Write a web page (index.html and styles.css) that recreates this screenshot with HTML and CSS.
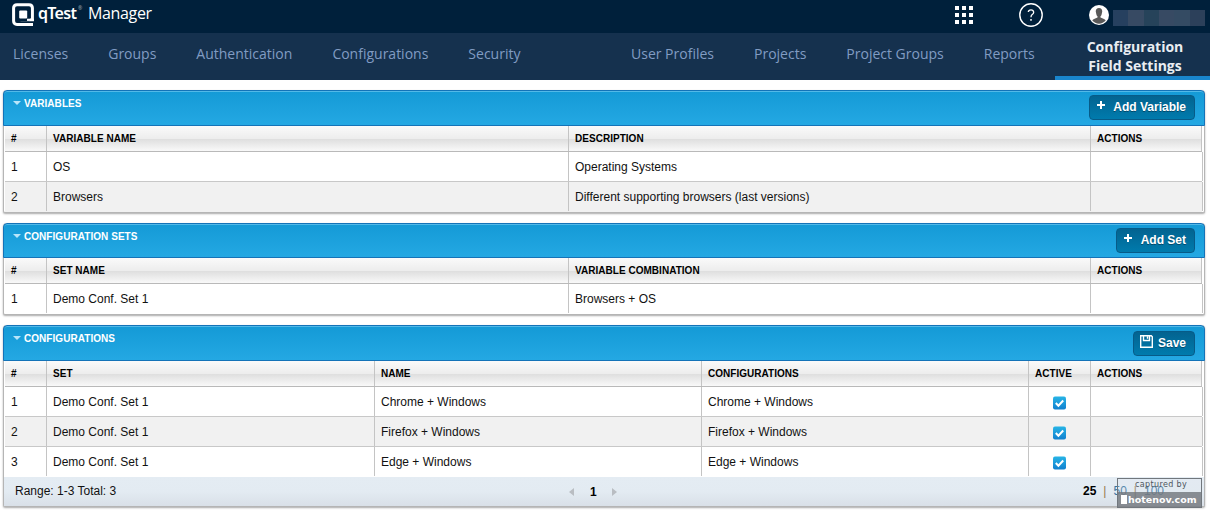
FILE: index.html
```html
<!DOCTYPE html>
<html lang="en">
<head>
<meta charset="utf-8">
<title>qTest Manager - Configuration Field Settings</title>
<link rel="stylesheet" href="styles.css">
</head>
<body>
<header class="topbar">
  <div class="brand">
    <svg class="logo" width="23" height="24" viewBox="0 0 23 24"><path d="M21 21.4H5Q1.6 21.4 1.6 18V5Q1.6 1.7 5 1.7H17Q20.4 1.7 20.4 5V16.7H8.5" fill="none" stroke="#fff" stroke-width="3"/><rect x="4.8" y="5" width="13.6" height="13.3" rx="2" fill="#00203b"/><rect x="7.2" y="7.6" width="8" height="8" rx="1" fill="#fff"/><path d="M15 16.8h6.8" stroke="#fff" stroke-width="2.2"/></svg>
    <span class="qtest">qTest</span><span class="reg">®</span>
    <span class="manager">Manager</span>
  </div>
  <div class="tools">
    <svg class="apps" width="18" height="18" viewBox="0 0 18 18" fill="#fff"><path d="M0 0h4v4H0zM7 0h4v4H7zM14 0h4v4h-4zM0 7h4v4H0zM7 7h4v4H7zM14 7h4v4h-4zM0 14h4v4H0zM7 14h4v4H7zM14 14h4v4h-4z"/></svg>
    <svg class="help" width="24" height="24" viewBox="0 0 24 24" fill="none" stroke="#fff"><circle cx="12" cy="12" r="11.2" stroke-width="1.4"/><path d="M9.3 9Q9.5 6.8 12 6.8T14.7 9.2Q14.7 10.5 13.2 11.6Q12 12.5 12 14.2" stroke-width="1.3"/><path d="M12 16v1.7" stroke-width="1.5"/></svg>
    <svg class="avatar" width="20" height="20" viewBox="0 0 20 20"><circle cx="10" cy="10" r="10" fill="#fff"/><path d="M10 3C7.6 3 6.6 4.6 6.8 6.8L7.4 9.4Q7.8 10.7 8.5 11.3V12.6L5 14Q3.6 14.6 3.3 15.6A8.8 8.8 0 0 0 16.7 15.6Q16.4 14.6 15 14L11.5 12.6V11.3Q12.2 10.7 12.6 9.4L13.2 6.8C13.4 4.6 12.4 3 10 3Z" fill="#595959"/></svg>
    <div class="mask"><i></i><i></i><i></i><i></i><i></i><i></i></div>
  </div>
</header>
<nav class="nav">
  <div class="nav-left"><a>Licenses</a><a>Groups</a><a>Authentication</a><a>Configurations</a><a>Security</a></div>
  <div class="nav-right"><a>User Profiles</a><a>Projects</a><a>Project Groups</a><a>Reports</a></div>
  <a class="active">Configuration<br>Field Settings</a>
</nav>
<main>
  <section class="panel variables">
    <div class="title"><i class="caret"></i><h2>VARIABLES</h2>
      <button class="w-var"><svg width="8" height="8" viewBox="0 0 8 8"><path d="M3 0h2v3h3v2H5v3H3V5H0V3h3z" fill="#fff"/></svg>Add Variable</button></div>
    <div class="row head"><b>#</b><b>VARIABLE NAME</b><b>DESCRIPTION</b><b>ACTIONS</b></div>
    <div class="row"><span>1</span><span>OS</span><span>Operating Systems</span><span></span></div>
    <div class="row alt"><span>2</span><span>Browsers</span><span>Different supporting browsers (last versions)</span><span></span></div>
  </section>
  <section class="panel sets">
    <div class="title"><i class="caret"></i><h2>CONFIGURATION SETS</h2>
      <button class="w-set"><svg width="8" height="8" viewBox="0 0 8 8"><path d="M3 0h2v3h3v2H5v3H3V5H0V3h3z" fill="#fff"/></svg>Add Set</button></div>
    <div class="row head"><b>#</b><b>SET NAME</b><b>VARIABLE COMBINATION</b><b>ACTIONS</b></div>
    <div class="row"><span>1</span><span>Demo Conf. Set 1</span><span>Browsers + OS</span><span></span></div>
  </section>
  <section class="panel configs">
    <div class="title"><i class="caret"></i><h2>CONFIGURATIONS</h2>
      <button class="w-save"><svg width="13" height="13" viewBox="0 0 13 13" fill="none" stroke="#fff"><path d="M.7.7h10.6l1 1v10.6H.7z" stroke-width="1.4"/><path d="M3.5 1v4.5h6V1M7.5 1.3v2.5" stroke-width="1.4"/></svg>Save</button></div>
    <div class="row head"><b>#</b><b>SET</b><b>NAME</b><b>CONFIGURATIONS</b><b>ACTIVE</b><b>ACTIONS</b></div>
    <div class="row"><span>1</span><span>Demo Conf. Set 1</span><span>Chrome + Windows</span><span>Chrome + Windows</span><span class="check"><svg width="13" height="14" viewBox="0 0 13 14"><use href="#tick"/></svg></span><span></span></div>
    <div class="row alt"><span>2</span><span>Demo Conf. Set 1</span><span>Firefox + Windows</span><span>Firefox + Windows</span><span class="check"><svg width="13" height="14" viewBox="0 0 13 14"><use href="#tick"/></svg></span><span></span></div>
    <div class="row last"><span>3</span><span>Demo Conf. Set 1</span><span>Edge + Windows</span><span>Edge + Windows</span><span class="check"><svg width="13" height="14" viewBox="0 0 13 14"><use href="#tick"/></svg></span><span></span></div>
    <div class="footer">
      <span>Range: 1-3 Total: 3</span>
      <div class="pager"><i class="prev"></i><b>1</b><i class="next"></i></div>
      <div class="sizes"><b>25</b><em>|</em><a>50</a><em>|</em><a>100</a></div>
    </div>
    <div class="stamp"><div class="cap">captured by</div><div class="site"><i></i>hotenov.com</div></div>
  </section>
</main>
<svg class="defs" width="0" height="0"><defs>
  <linearGradient id="blue" x1="0" y1="0" x2="0" y2="1"><stop offset="0" stop-color="#27b4e6"/><stop offset="1" stop-color="#1180cf"/></linearGradient>
  <g id="tick"><rect width="13" height="13" y=".5" rx="2" fill="url(#blue)"/><path d="M2.8 7l2.6 2.7 4.8-5.2" fill="none" stroke="#fff" stroke-width="2"/></g>
</defs></svg>
</body>
</html>
```
FILE: styles.css
```css
* { box-sizing: border-box; }
body { margin: 0; height: 516px; overflow: hidden; background: #fff; color: #111; font: 12px "Liberation Sans", Arial, sans-serif; }
.topbar { height: 33px; background: #00203b; display: flex; justify-content: space-between; font-family: "Open Sans", "Noto Sans", sans-serif; color: #fff; }
.brand { display: flex; align-items: flex-start; padding: 3px 0 0 12px; }
.qtest { font: 600 16px/21px "Noto Sans", sans-serif; margin-left: 3px; width: 40px; letter-spacing: -.7px; }
.reg { font-size: 5px; line-height: 10px; width: 10px; opacity: .6; }
.manager { font: 16px/21px "Open Sans", sans-serif; letter-spacing: -.35px; }
.tools { display: flex; padding: 3px 5px 0 0; }
.apps { margin: 3px 46px 0 0; }
.help { margin: 0 46px 0 0; }
.avatar { margin: 2px 4px 0 0; }
.mask { display: grid; grid-template-columns: repeat(6, 1fr); width: 92px; height: 16px; margin-top: 7px; }
.mask i { background: #374a63; }
.mask i:nth-child(1) { background: #26405f; }
.mask i:nth-child(3) { background: #26435a; }
.mask i:nth-child(5) { background: #344b63; }
.mask i:nth-child(6) { background: #2c405a; }

.nav { height: 47px; background: #15314e; display: flex; font: 14px/20px "Open Sans", "Noto Sans", sans-serif; color: #819cc3; }
.nav-left, .nav-right { display: flex; gap: 40px; padding: 11px 0 0 13px; white-space: nowrap; }
.nav-left { width: 618px; }
.nav-right { width: 437px; }
.nav .active { width: 155px; border-bottom: 4px solid #1985cc; color: #e9edf2; font-weight: 700; line-height: 19px; text-align: center; padding: 4px 0 0 5px; white-space: nowrap; }

main { padding: 10px 5px 0 3px; }
.panel { position: relative; width: 1202px; border: 1px solid #b5b5b5; border-top: 0; padding: 0 2px 0 1px; border-radius: 4px 4px 2px 2px; box-shadow: 0 1px 2px #aaa; margin-bottom: 10px; background: #fff; }
.title { height: 36px; margin: 0 -3px 0 -2px; display: flex; align-items: flex-start; border: 1px solid #1473b8; border-radius: 4px 4px 0 0; background: linear-gradient(#149ad6, #24a8e3); box-shadow: inset 0 1px #52b9e8; padding: 0 9px 0 9px; }
.sets .title { height: 35px; }
.caret { border: 4px solid transparent; border-top: 4px solid #b8e5fa; border-bottom: 0; margin-top: 10px; }
h2 { margin: 6px 0 0 3px; font: bold 10px/14px "Liberation Sans", Arial, sans-serif; letter-spacing: .05px; color: #fff; flex: 1; }
button { margin: 4px 0 0; height: 25px; border: 1px solid #075b88; border-radius: 4px; background: linear-gradient(#036390, #007bad); color: #fff; font: bold 12px/23px "Liberation Sans", Arial, sans-serif; padding: 0 8px; display: flex; justify-content: space-between; text-shadow: 0 1px #024a6c; white-space: nowrap; }
button svg { margin-top: 5px; margin-left: -1px; }
.w-var { width: 106px; }
.w-set { width: 79px; }
.w-save { width: 62px; padding-left: 7px; margin-top: 5px; }
.w-save svg { margin-top: 3px; }
.row { display: grid; grid-template-columns: 42px 522px 522px 112px; height: 30px; border-bottom: 1px solid #c8c8c8; line-height: 31px; }
.configs .row { grid-template-columns: 42px 328px 327px 327px 62px 112px; }
.row > * { height: 29px; border-right: 1px solid #c4c4c4; padding-left: 6px; white-space: nowrap; }
.head { height: 26px; font-size: 10px; line-height: 26px; letter-spacing: .03px; background: linear-gradient(#fafafa 0, #ededed 50%, #dedede 52%, #f9f9f9 100%); border-color: #b9b9b9; color: #000; }
.head > * { height: 25px; }
.head > :last-child { margin-right: 1px; }
.alt { background: #f1f1f1; }
.panel > .alt:last-child, .sets .row:last-child { border-bottom: 0; }
.row .check { padding: 9px 0 0 24px; line-height: 0; }
.last { border: 0; }
.footer { height: 29px; margin: 0 -2px 0 -1px; background: linear-gradient(#e4ecf3 0, #e3ebf2 50%, #d9e0e8); display: grid; grid-template-columns: 557px 1fr 121px; line-height: 29px; }
.footer > span { padding-left: 11px; }
.pager { display: flex; align-items: center; padding: 0 0 2px 8px; gap: 16px; }
.pager b { line-height: 27px; padding-top: 2px; color: #000; width: 6px; }
.prev, .next { border: 4px solid transparent; border-left: 0; border-right: 5px solid #b9bdc2; }
.next { border-left: 5px solid #b9bdc2; border-right: 0; }
.sizes { display: flex; gap: 7px; }
.sizes b { color: #000; }
.sizes em { font-style: normal; color: #94794b; }
.sizes a { color: #37749f; }
.stamp { position: absolute; right: 2px; bottom: -2px; width: 85px; height: 30px; border: 1px solid #71777d; background: rgba(225,232,238,.2); }
.cap { height: 13px; color: #4e5760; text-align: right; padding-right: 14px; letter-spacing: .35px; font: 8px/12px "DejaVu Sans", sans-serif; white-space: nowrap; }
.site { height: 15px; background: rgba(112,118,124,.8); color: #fff; font: bold 9.5px/14px "DejaVu Sans", sans-serif; display: flex; align-items: center; padding-left: 3px; white-space: nowrap; }
.site i { width: 6px; height: 9px; background: #fff; margin-right: 1px; }
.defs { display: block; }
```
